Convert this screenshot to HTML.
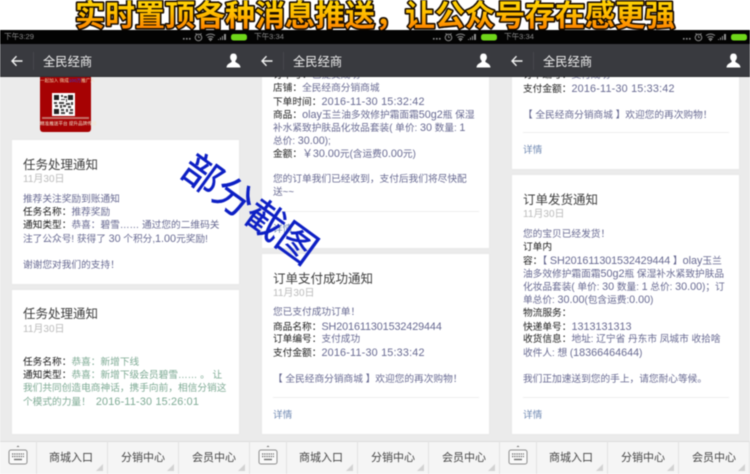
<!DOCTYPE html>
<html lang="zh"><head><meta charset="utf-8"><title>全民经商</title>
<style>
html,body{margin:0;padding:0;background:#fff}
#r{position:relative;width:750px;height:474px;overflow:hidden;background:#fff;font-family:"Liberation Sans","Noto Sans CJK SC",sans-serif;filter:blur(.4px)}
.p{position:absolute;top:30px;width:250px;height:444px;background:#ebebeb;overflow:hidden}
.p>*{position:absolute}
.st{left:0;top:0;width:250px;height:14px;background:#030303}
.tm{left:4px;top:2px;font-size:7.6px;line-height:10px;color:#8a8a8a}
.nav{left:0;top:14px;width:250px;height:33px;background:#393a3f;border-bottom:1px solid #2f3034;box-sizing:border-box}
.nt{left:43px;top:24px;font-size:12.3px;line-height:16px;color:#eee;white-space:nowrap}
.sep{left:33px;top:22px;width:1px;height:18px;background:#46474c}
.c{left:12px;width:227px;background:#fff;box-shadow:0 0 1px #ddd}
.t,.d,.l,.x{position:absolute;white-space:nowrap;margin-top:1px}
.p .l,.p .t,.p .d,.p .x{left:23px}
.t{font-size:12.5px;line-height:16px;color:#3f3f3f}
.d{font-size:9.7px;line-height:12px;color:#bbb}
.l{font-size:9.7px;line-height:14px;color:#686a92}
.g{color:#7fab95}
.x{font-size:9.7px;line-height:14px;color:#7089b2}
.l b{font-weight:normal;color:#1c1c1c}
.l i{font-style:normal;font-size:10.8px}
.l i.dt{letter-spacing:.2px}
.l i.sh{letter-spacing:-.1px}
.hr{left:23px;width:206px;height:1px;background:#eee}
.f{left:0;top:411px;width:250px;height:33px;background:#f5f5f5;border-top:1px solid #dcdcdc;box-sizing:border-box}
.v{top:411px;width:1px;height:33px;background:#e2e2e2}
.m{top:421px;font-size:11px;line-height:14px;color:#444;white-space:nowrap}
.tri{top:434px;width:0;height:0;border-style:solid;border-width:0 0 7px 7px;border-color:transparent transparent #d2d2d2 transparent}
svg{display:block}
</style></head><body><div id="r">

<svg style="position:absolute;left:0;top:0" width="750" height="31">
<defs><linearGradient id="gr" x1="0" y1="0" x2="0" y2="1"><stop offset="0" stop-color="#ffe60a"/><stop offset=".5" stop-color="#ffbe00"/><stop offset="1" stop-color="#ff6c00"/></linearGradient>
<symbol id="stat" viewBox="0 0 70 12"><g fill="#8f8f8f"><rect x="0" y="7" width="1.6" height="1.6"/><rect x="3" y="7" width="1.6" height="1.6"/><rect x="6" y="7" width="1.6" height="1.6"/></g>
<circle cx="15.5" cy="6.5" r="3.3" fill="none" stroke="#8f8f8f" stroke-width="1"/><path d="M12.5 2.500l1.500 1M18.500 2.500l-1.500 1M15.500 4.500v2h1.500" fill="none" stroke="#8f8f8f" stroke-width=".8"/>
<path d="M23 4.500q4.500-3 9 0M24.500 6.500q3-2 6 0M27.500 9.500l-1.500-1.500q1.500-1 3 0z" fill="none" stroke="#8f8f8f" stroke-width="1"/>
<path d="M35 9h1V8h-1zM37 9h1V6.500h-1zM39 9h1V5h-1zM41 9h2V3h-2z" fill="#8f8f8f"/>
<rect x="48" y="3" width="16" height="6.500" rx="2.500" fill="#6fd61a"/></symbol>
<symbol id="user" viewBox="0 0 16 16"><path d="M8 0.500c-2.500 0-3.600 1.900-3.600 4 0 1.700.8 3 1.600 3.800v1.200C5 10.800 1 11 .5 15.500h15C15 11 11 10.800 10 9.500V8.300c.8-.8 1.600-2.100 1.600-3.800 0-2.100-1.100-4-3.600-4z" fill="#fff"/></symbol>
<symbol id="back" viewBox="0 0 12 12"><path d="M11.500 6H1M5.500 1.200L1 6l4.500 4.800" fill="none" stroke="#f2f2f2" stroke-width="1.400"/></symbol>
<symbol id="kb" viewBox="0 0 20 22"><path d="M8.500 3L10 1.500 11.500 3z" fill="#777"/><rect x="1" y="6" width="18" height="14" rx="2" fill="#fafafa" stroke="#8d8d8d"/><path d="M4 10h12M4 12.500h12" stroke="#666" stroke-width="1.300" stroke-dasharray="1.300 .9"/><path d="M6 15.500h8" stroke="#666" stroke-width="1.300"/></symbol>
</defs>
<text x="375" y="26" text-anchor="middle" font-size="30" font-weight="700" font-family="'Noto Sans CJK SC',sans-serif" fill="url(#gr)" stroke="#1a0d00" stroke-width="3.200" paint-order="stroke" stroke-linejoin="round">实时置顶各种消息推送，让公众号存在感更强</text>
</svg>

<!-- panel 1 -->
<div class="p" style="left:0">
<div style="left:40px;top:47px;width:51px;height:55px;background:#a60203;border-radius:0 0 3px 3px"></div>
<div style="left:40px;top:48px;width:51px;text-align:center;font-size:4.600px;line-height:6px;color:#f3d9b0;white-space:nowrap">一起加入 微成<span style="color:#2b3fe0">100万</span>推广人</div>
<svg style="left:52px;top:63px" width="23" height="23" viewBox="0 0 23 23"><rect width="23" height="23" fill="#fff"/><path d="M2 2h5v5H2zM16 2h5v5h-5zM2 16h5v5H2z" fill="#222"/><path d="M9 2h2v2H9zM12 3h3v2h-3zM9 6h4v1H9zM14 6h1v3h-1zM2 9h3v2H2zM7 9h5v2H7zM14 10h4v2h-4zM19 9h2v3h-2zM3 12h3v2H3zM8 12h2v3H8zM11 12h3v2h-3zM16 13h3v2h-3zM9 16h3v2H9zM14 16h2v3h-2zM18 16h3v2h-3zM9 19h4v2H9zM17 19h4v2h-4z" fill="#444"/></svg>
<div style="left:40px;top:91px;width:51px;text-align:center;font-size:4.600px;line-height:6px;color:#f0e6d0;white-space:nowrap">精准推送平台 提升品牌传播</div>
<div style="left:42px;top:87px;width:47px;height:2px;background:#d8b8a8;opacity:.6"></div>

<div class="c" style="top:110px;height:144px"></div>
<div class="t" style="top:126px">任务处理通知</div>
<div class="d" style="top:143px"><span style="font-size:10px">11月30日</span></div>
<div class="l" style="top:162px">推荐关注奖励到账通知</div>
<div class="l" style="top:175px"><b>任务名称：</b>推荐奖励</div>
<div class="l" style="top:188px"><b>通知类型：</b>恭喜：碧雪…… 通过您的二维码关</div>
<div class="l" style="top:201px">注了公众号! 获得了 <i>30</i> 个积分,<i>1.00</i>元奖励!</div>
<div class="l" style="top:228px">谢谢您对我们的支持！</div>

<div class="c" style="top:260px;height:144px"></div>
<div class="t" style="top:275px">任务处理通知</div>
<div class="d" style="top:293px"><span style="font-size:10px">11月30日</span></div>
<div class="l g" style="top:325px"><b>任务名称：</b>恭喜：新增下线</div>
<div class="l g" style="top:338px"><b>通知类型：</b>恭喜：新增下级会员碧雪…… 。 让</div>
<div class="l g" style="top:351px">我们共同创造电商神话，携手向前，相信分销这</div>
<div class="l g" style="top:364px">个模式的力量！<i class="dt" style="margin-left:5px">2016-11-30 15:26:01</i></div>

<div class="st"></div><div class="tm">下午3:29</div>
<svg style="left:183px;top:1px" width="70" height="12"><use href="#stat"/></svg>
<div class="nav"></div><svg style="left:11px;top:25px" width="12" height="12"><use href="#back"/></svg><div class="sep"></div><div class="nt">全民经商</div>
<svg style="left:226px;top:23px" width="15" height="15"><use href="#user"/></svg>
<div class="f"></div><svg style="left:8px;top:414px" width="20" height="22"><use href="#kb"/></svg>
<div class="v" style="left:36px"></div><div class="v" style="left:107px"></div><div class="v" style="left:178px"></div><div class="v" style="left:249px"></div>
<div class="m" style="left:49px">商城入口</div><div class="m" style="left:121px">分销中心</div><div class="m" style="left:192px">会员中心</div>
<div class="tri" style="left:96px"></div><div class="tri" style="left:167px"></div><div class="tri" style="left:238px"></div>
</div>

<!-- panel 2 -->
<div class="p" style="left:250px">
<div class="c" style="top:40px;height:178px"></div>
<div class="l" style="top:38px"><b>订单号：</b>已提交成功</div>
<div class="l" style="top:51px"><b>店铺：</b>全民经商分销商城</div>
<div class="l" style="top:64px"><b>下单时间：</b><i class="dt">2016-11-30 15:32:42</i></div>
<div class="l" style="top:77px"><b>商品：</b><i>olay</i>玉兰油多效修护霜面霜<i>50g2</i>瓶 保湿</div>
<div class="l" style="top:90px">补水紧致护肤品化妆品套装( 单价: <i>30</i> 数量: <i>1</i></div>
<div class="l" style="top:103px">总价: <i>30.00</i>);</div>
<div class="l" style="top:116px"><b>金额：</b><i>￥30.00</i>元(含运费<i>0.00</i>元)</div>
<div class="l" style="top:142px">您的订单我们已经收到，支付后我们将尽快配</div>
<div class="l" style="top:155px">送~~</div>
<div class="hr" style="top:181px"></div>
<div class="x" style="top:192px">详情</div>

<div class="c" style="top:224px;height:180px"></div>
<div class="t" style="top:240px">订单支付成功通知</div>
<div class="d" style="top:257px"><span style="font-size:10px">11月30日</span></div>
<div class="l" style="top:275px">您已支付成功订单！</div>
<div class="l" style="top:289px"><b>商品名称：</b><i class="sh">SH201611301532429444</i></div>
<div class="l" style="top:302px"><b>订单编号：</b>支付成功</div>
<div class="l" style="top:315px"><b>支付金额：</b><i class="dt">2016-11-30 15:33:42</i></div>
<div class="l" style="top:342px">【 全民经商分销商城 】欢迎您的再次购物！</div>
<div class="hr" style="top:367px"></div>
<div class="x" style="top:378px">详情</div>

<div class="st"></div><div class="tm">下午3:34</div>
<svg style="left:183px;top:1px" width="70" height="12"><use href="#stat"/></svg>
<div class="nav"></div><svg style="left:11px;top:25px" width="12" height="12"><use href="#back"/></svg><div class="sep"></div><div class="nt">全民经商</div>
<svg style="left:226px;top:23px" width="15" height="15"><use href="#user"/></svg>
<div class="f"></div><svg style="left:8px;top:414px" width="20" height="22"><use href="#kb"/></svg>
<div class="v" style="left:36px"></div><div class="v" style="left:107px"></div><div class="v" style="left:178px"></div><div class="v" style="left:249px"></div>
<div class="m" style="left:49px">商城入口</div><div class="m" style="left:121px">分销中心</div><div class="m" style="left:192px">会员中心</div>
<div class="tri" style="left:96px"></div><div class="tri" style="left:167px"></div><div class="tri" style="left:238px"></div>
</div>

<!-- panel 3 -->
<div class="p" style="left:500px">
<div class="c" style="top:40px;height:99px"></div>
<div class="l" style="top:38px"><b>订单编号：</b>支付成功</div>
<div class="l" style="top:51px"><b>支付金额：</b><i class="dt">2016-11-30 15:33:42</i></div>
<div class="l" style="top:78px">【 全民经商分销商城 】欢迎您的再次购物！</div>
<div class="hr" style="top:102px"></div>
<div class="x" style="top:113px">详情</div>

<div class="c" style="top:145px;height:259px"></div>
<div class="t" style="top:161px">订单发货通知</div>
<div class="d" style="top:178px"><span style="font-size:10px">11月30日</span></div>
<div class="l" style="top:197px">您的宝贝已经发货！</div>
<div class="l" style="top:210px"><b>订单内</b></div>
<div class="l" style="top:223px"><b>容：</b>【 <i class="sh">SH201611301532429444</i> 】<i>olay</i>玉兰</div>
<div class="l" style="top:236px">油多效修护霜面霜<i>50g2</i>瓶 保湿补水紧致护肤品</div>
<div class="l" style="top:249px">化妆品套装( 单价: <i>30</i> 数量: <i>1</i> 总价: <i>30.00</i>)；订</div>
<div class="l" style="top:262px">单总价: <i>30.00</i>(包含运费:<i>0.00</i>)</div>
<div class="l" style="top:276px"><b>物流服务：</b></div>
<div class="l" style="top:289px"><b>快递单号：</b><i>1313131313</i></div>
<div class="l" style="top:302px"><b>收货信息：</b>地址: 辽宁省 丹东市 凤城市 收拾啥</div>
<div class="l" style="top:315px">收件人: 想 (<i>18366464644</i>)</div>
<div class="l" style="top:342px">我们正加速送到您的手上，请您耐心等候。</div>
<div class="hr" style="top:367px"></div>
<div class="x" style="top:378px">详情</div>

<div class="st"></div><div class="tm">下午3:34</div>
<svg style="left:183px;top:1px" width="70" height="12"><use href="#stat"/></svg>
<div class="nav"></div><svg style="left:11px;top:25px" width="12" height="12"><use href="#back"/></svg><div class="sep"></div><div class="nt">全民经商</div>
<svg style="left:226px;top:23px" width="15" height="15"><use href="#user"/></svg>
<div class="f"></div><svg style="left:8px;top:414px" width="20" height="22"><use href="#kb"/></svg>
<div class="v" style="left:36px"></div><div class="v" style="left:107px"></div><div class="v" style="left:178px"></div><div class="v" style="left:249px"></div>
<div class="m" style="left:49px">商城入口</div><div class="m" style="left:121px">分销中心</div><div class="m" style="left:192px">会员中心</div>
<div class="tri" style="left:96px"></div><div class="tri" style="left:167px"></div><div class="tri" style="left:238px"></div>
</div>

<div style="position:absolute;left:151px;top:183px;width:200px;height:48px;text-align:center;font-size:39px;line-height:48px;color:#0d1fc4;white-space:nowrap;transform:rotate(36deg);-webkit-text-stroke:.4px #0d1fc4;font-family:'Noto Sans CJK SC',sans-serif">部分截图</div>
</div></body></html>
